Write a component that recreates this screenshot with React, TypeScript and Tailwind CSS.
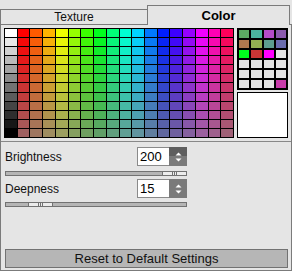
import React from "react";

const font = { fontFamily: '"Liberation Sans", Arial, sans-serif' };

const HUES = 17;
const ROWS = 12;

function cellColor(row: number, col: number) {
  if (col === 0) {
    const l = Math.round(100 - (row * 100) / (ROWS - 1));
    return `hsl(0, 0%, ${l}%)`;
  }
  const h = ((col - 1) * 360) / HUES;
  const s = 100 - (row * 75) / (ROWS - 1);
  return `hsl(${h}, ${s}%, 50%)`;
}

const swatches: (string | null)[] = [
  "#5bab63", "#4bb59e", "#b44bc8", "#8b5aad",
  "#b0784f", "#93b052", "#5c9e8f", "#6a6cae",
  "#00ff1e", "#c93636", "#ff00ff", null,
  null, null, null, null,
  null, null, null, null,
  null, null, null, "#c83caa",
];

function SpinArrows({ hover }: { hover?: boolean }) {
  return (
    <div className="relative w-[18px] h-full bg-[#7a7a7a] flex items-center justify-center">
      {hover && <div className="absolute top-0 left-0 right-0 h-[9px] bg-[#5e5e5e]" />}
      <svg width="7" height="10" viewBox="0 0 7 10" className="relative">
        <path d="M3.5 0.5 L6.5 3.5 L0.5 3.5 Z" fill="#fff" />
        <path d="M0.5 6.5 L6.5 6.5 L3.5 9.5 Z" fill="#fff" />
      </svg>
    </div>
  );
}

function Spinner({ value, hover }: { value: string; hover?: boolean }) {
  return (
    <div className="flex w-[50px] h-[19px]">
      <div className="flex-1 bg-white border-t border-l border-b border-[#8a8a8a] flex items-center pl-[2px] text-[13px] text-black">
        {value}
      </div>
      <SpinArrows hover={hover} />
    </div>
  );
}

function Slider({ left }: { left: number }) {
  return (
    <div className="relative ml-[4px] w-[182px] h-[5px] bg-[#b5b5b5] border border-[#727272]">
      <div
        className="absolute -top-px h-[5px] w-[25px] bg-[#ececec] border border-[#727272] flex items-center justify-center gap-[1px]"
        style={{ left }}
      >
        <div className="w-px h-[3px] bg-[#727272]" />
        <div className="w-px h-[3px] bg-[#727272]" />
        <div className="w-px h-[3px] bg-[#727272]" />
      </div>
    </div>
  );
}

export default function App() {
  return (
    <div className="w-[292px] h-[271px] bg-[#e5e5e5] flex flex-col text-[#111]" style={font}>
      {/* Tabs */}
      <div className="flex items-end h-[25px]">
        <div className="w-[147px] h-[16px] border-l border-t border-b border-[#7b7b7b] flex items-center justify-center text-[12px]">
          Texture
        </div>
        <div className="w-[143px] h-[20px] border-l border-t border-r border-[#7b7b7b] flex items-center justify-center text-[13px] font-bold text-black">
          Color
        </div>
        <div className="flex-1 h-[16px] border-b border-[#7b7b7b]" />
      </div>

      {/* Panel */}
      <div className="flex-1 flex flex-col border-l border-r border-b border-[#7b7b7b]">
        <div className="flex pt-[3px] pl-[3px] gap-[3px]">
          <div className="w-[230px] h-[110px] bg-black p-px grid grid-cols-[repeat(18,minmax(0,1fr))] grid-rows-[repeat(12,minmax(0,1fr))] gap-px">
            {Array.from({ length: ROWS }).map((_, r) =>
              Array.from({ length: HUES + 1 }).map((_, c) => (
                <div key={`${r}-${c}`} style={{ backgroundColor: cellColor(r, c) }} />
              ))
            )}
          </div>
          <div className="flex flex-col gap-[2px]">
            <div className="w-[51px] h-[62px] bg-black p-[2px] grid grid-cols-4 grid-rows-6 gap-[2px]">
              {swatches.map((s, i) => (
                <div key={i} className={s ? "" : "bg-[#e3e3e3]"} style={s ? { backgroundColor: s } : undefined} />
              ))}
            </div>
            <div className="w-[51px] h-[46px] bg-white border border-black" />
          </div>
        </div>

        <div className="mt-[3px] border-t border-[#888]" />

        {/* Brightness */}
        <div className="flex items-center mt-[5px] pl-[4px]">
          <div className="w-[132px] text-[12px]">Brightness</div>
          <Spinner value="200" hover />
        </div>
        <div className="mt-[5px]">
          <Slider left={156} />
        </div>

        {/* Deepness */}
        <div className="flex items-center mt-[3px] pl-[4px]">
          <div className="w-[132px] text-[12px]">Deepness</div>
          <Spinner value="15" />
        </div>
        <div className="mt-[4px]">
          <Slider left={22} />
        </div>

        <div className="mt-auto mb-[2px] ml-[4px] w-[283px] h-[19px] bg-[#b6b6b6] border border-[#727272] flex items-center justify-center text-[13px]">
          Reset to Default Settings
        </div>
      </div>
    </div>
  );
}
